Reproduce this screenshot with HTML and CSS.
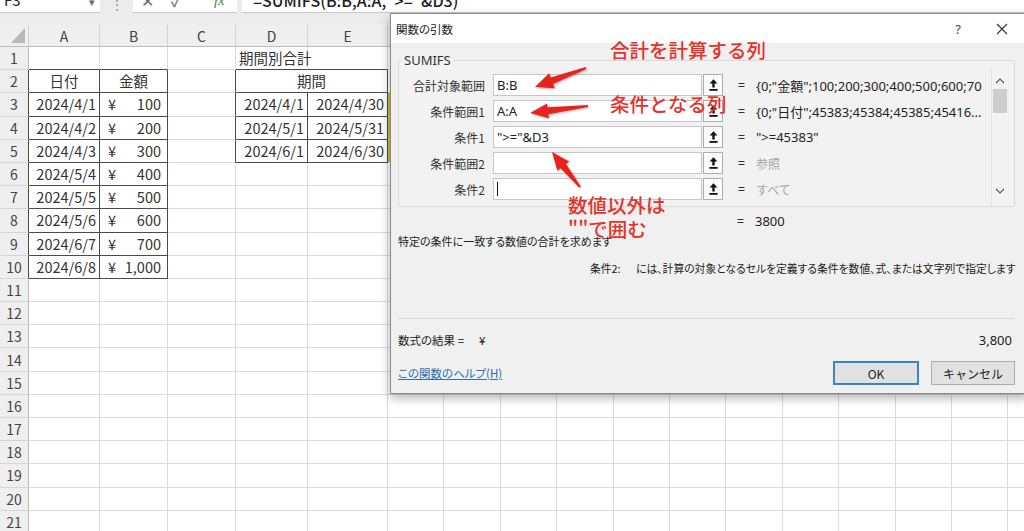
FILE: index.html
```html
<!DOCTYPE html>
<html lang="ja">
<head>
<meta charset="utf-8">
<title>関数の引数 - SUMIFS</title>
<link rel="stylesheet" href="styles.css">
</head>
<body>
<div class="fbar">
  <div class="namebox"><span class="fb-text">F3</span><span class="dd">▾</span></div>
  <div class="dots">⋮</div>
  <div class="fbtns"><span class="fb-text ic">✕</span><span class="fb-text ic">✓</span><span class="fb-text fx">fx</span></div>
  <div class="formula"><span class="fb-text">=SUMIFS(B:B,A:A,"&gt;="&amp;D3)</span></div>
</div>

<div class="sheet">
  <div class="row head"><span class="corner"><svg width="16" height="17" viewBox="0 0 16 17"><path d="M15 1 V16 H1 Z" fill="#b9b9b9"/></svg></span><span>A</span><span>B</span><span>C</span><span>D</span><span>E</span><span>F</span><span>G</span><span>H</span><span>I</span><span>J</span><span>K</span><span>L</span><span>M</span><span>N</span><span>O</span><span>P</span><span>Q</span></div>
  <div class="row"><span class="rh">1</span><span class="tb"></span><span class="tb"></span><span></span><span class="tb">期間別合計</span><span class="tb"></span><span></span><span></span><span></span><span></span><span></span><span></span><span></span><span></span><span></span><span></span><span></span><span></span></div>
  <div class="row"><span class="rh tr">2</span><span class="t ctr">日付</span><span class="t ctr">金額</span><span class="tr"></span><span class="t ctr span2">期間</span><span></span><span></span><span></span><span></span><span></span><span></span><span></span><span></span><span></span><span></span><span></span><span></span></div>
  <div class="row"><span class="rh tr">3</span><span class="t r">2024/4/1</span><span class="t yen"><span>¥</span><span>100</span></span><span class="tr"></span><span class="t r">2024/4/1</span><span class="t r">2024/4/30</span><span class="sel"></span><span></span><span></span><span></span><span></span><span></span><span></span><span></span><span></span><span></span><span></span><span></span></div>
  <div class="row"><span class="rh tr">4</span><span class="t r">2024/4/2</span><span class="t yen"><span>¥</span><span>200</span></span><span class="tr"></span><span class="t r">2024/5/1</span><span class="t r">2024/5/31</span><span class="sel"></span><span></span><span></span><span></span><span></span><span></span><span></span><span></span><span></span><span></span><span></span><span></span></div>
  <div class="row"><span class="rh tr">5</span><span class="t r">2024/4/3</span><span class="t yen"><span>¥</span><span>300</span></span><span class="tr"></span><span class="t r">2024/6/1</span><span class="t r">2024/6/30</span><span class="sel"></span><span></span><span></span><span></span><span></span><span></span><span></span><span></span><span></span><span></span><span></span><span></span></div>
  <div class="row"><span class="rh tr">6</span><span class="t r">2024/5/4</span><span class="t yen"><span>¥</span><span>400</span></span><span></span><span></span><span></span><span></span><span></span><span></span><span></span><span></span><span></span><span></span><span></span><span></span><span></span><span></span><span></span></div>
  <div class="row"><span class="rh tr">7</span><span class="t r">2024/5/5</span><span class="t yen"><span>¥</span><span>500</span></span><span></span><span></span><span></span><span></span><span></span><span></span><span></span><span></span><span></span><span></span><span></span><span></span><span></span><span></span><span></span></div>
  <div class="row"><span class="rh tr">8</span><span class="t r">2024/5/6</span><span class="t yen"><span>¥</span><span>600</span></span><span></span><span></span><span></span><span></span><span></span><span></span><span></span><span></span><span></span><span></span><span></span><span></span><span></span><span></span><span></span></div>
  <div class="row"><span class="rh tr">9</span><span class="t r">2024/6/7</span><span class="t yen"><span>¥</span><span>700</span></span><span></span><span></span><span></span><span></span><span></span><span></span><span></span><span></span><span></span><span></span><span></span><span></span><span></span><span></span><span></span></div>
  <div class="row"><span class="rh tr">10</span><span class="t r">2024/6/8</span><span class="t yen"><span>¥</span><span>1,000</span></span><span></span><span></span><span></span><span></span><span></span><span></span><span></span><span></span><span></span><span></span><span></span><span></span><span></span><span></span><span></span></div>
  <div class="row"><span class="rh">11</span><span></span><span></span><span></span><span></span><span></span><span></span><span></span><span></span><span></span><span></span><span></span><span></span><span></span><span></span><span></span><span></span><span></span></div>
  <div class="row"><span class="rh">12</span><span></span><span></span><span></span><span></span><span></span><span></span><span></span><span></span><span></span><span></span><span></span><span></span><span></span><span></span><span></span><span></span><span></span></div>
  <div class="row"><span class="rh">13</span><span></span><span></span><span></span><span></span><span></span><span></span><span></span><span></span><span></span><span></span><span></span><span></span><span></span><span></span><span></span><span></span><span></span></div>
  <div class="row"><span class="rh">14</span><span></span><span></span><span></span><span></span><span></span><span></span><span></span><span></span><span></span><span></span><span></span><span></span><span></span><span></span><span></span><span></span><span></span></div>
  <div class="row"><span class="rh">15</span><span></span><span></span><span></span><span></span><span></span><span></span><span></span><span></span><span></span><span></span><span></span><span></span><span></span><span></span><span></span><span></span><span></span></div>
  <div class="row"><span class="rh">16</span><span></span><span></span><span></span><span></span><span></span><span></span><span></span><span></span><span></span><span></span><span></span><span></span><span></span><span></span><span></span><span></span><span></span></div>
  <div class="row"><span class="rh">17</span><span></span><span></span><span></span><span></span><span></span><span></span><span></span><span></span><span></span><span></span><span></span><span></span><span></span><span></span><span></span><span></span><span></span></div>
  <div class="row"><span class="rh">18</span><span></span><span></span><span></span><span></span><span></span><span></span><span></span><span></span><span></span><span></span><span></span><span></span><span></span><span></span><span></span><span></span><span></span></div>
  <div class="row"><span class="rh">19</span><span></span><span></span><span></span><span></span><span></span><span></span><span></span><span></span><span></span><span></span><span></span><span></span><span></span><span></span><span></span><span></span><span></span></div>
  <div class="row"><span class="rh">20</span><span></span><span></span><span></span><span></span><span></span><span></span><span></span><span></span><span></span><span></span><span></span><span></span><span></span><span></span><span></span><span></span><span></span></div>
  <div class="row"><span class="rh">21</span><span></span><span></span><span></span><span></span><span></span><span></span><span></span><span></span><span></span><span></span><span></span><span></span><span></span><span></span><span></span><span></span><span></span></div>
</div>

<div class="dialog">
  <div class="titlebar">
    <span class="title">関数の引数</span>
    <span class="tbtn help">?</span>
    <span class="tbtn close"><svg width="12" height="12" viewBox="0 0 12 12"><path d="M1 1 L11 11 M11 1 L1 11" stroke="#333" stroke-width="1.1"/></svg></span>
  </div>
  <div class="dbody">
    <fieldset class="group">
      <legend>SUMIFS</legend>
      <div class="group-inner">
        <div class="args">
          <div class="arg"><span class="lbl">合計対象範囲</span><span class="input">B:B</span><span class="pick"><svg width="9" height="12" viewBox="0 0 9 12"><path d="M4.5 0.3 L0.6 4.6 H3.3 V8.6 H5.7 V4.6 H8.4 Z" fill="#111"/><rect x="0.4" y="10" width="8.2" height="1.8" fill="#111"/></svg></span><span class="eq">=</span><span class="val">{0;"金額";100;200;300;400;500;600;700;1000}</span></div>
          <div class="arg"><span class="lbl">条件範囲1</span><span class="input">A:A</span><span class="pick"><svg width="9" height="12" viewBox="0 0 9 12"><path d="M4.5 0.3 L0.6 4.6 H3.3 V8.6 H5.7 V4.6 H8.4 Z" fill="#111"/><rect x="0.4" y="10" width="8.2" height="1.8" fill="#111"/></svg></span><span class="eq">=</span><span class="val">{0;"日付";45383;45384;45385;45416...</span></div>
          <div class="arg"><span class="lbl">条件1</span><span class="input">"&gt;="&amp;D3</span><span class="pick"><svg width="9" height="12" viewBox="0 0 9 12"><path d="M4.5 0.3 L0.6 4.6 H3.3 V8.6 H5.7 V4.6 H8.4 Z" fill="#111"/><rect x="0.4" y="10" width="8.2" height="1.8" fill="#111"/></svg></span><span class="eq">=</span><span class="val">"&gt;=45383"</span></div>
          <div class="arg"><span class="lbl">条件範囲2</span><span class="input"></span><span class="pick"><svg width="9" height="12" viewBox="0 0 9 12"><path d="M4.5 0.3 L0.6 4.6 H3.3 V8.6 H5.7 V4.6 H8.4 Z" fill="#111"/><rect x="0.4" y="10" width="8.2" height="1.8" fill="#111"/></svg></span><span class="eq">=</span><span class="val hint">参照</span></div>
          <div class="arg"><span class="lbl">条件2</span><span class="input"><span class="caret"></span></span><span class="pick"><svg width="9" height="12" viewBox="0 0 9 12"><path d="M4.5 0.3 L0.6 4.6 H3.3 V8.6 H5.7 V4.6 H8.4 Z" fill="#111"/><rect x="0.4" y="10" width="8.2" height="1.8" fill="#111"/></svg></span><span class="eq">=</span><span class="val hint">すべて</span></div>
        </div>
        <div class="vscroll">
          <svg width="10" height="6" viewBox="0 0 10 6"><path d="M1 5 L5 1 L9 5" fill="none" stroke="#555" stroke-width="1.1"/></svg>
          <span class="thumb"></span>
          <span class="spacer"></span>
          <svg width="10" height="6" viewBox="0 0 10 6"><path d="M1 1 L5 5 L9 1" fill="none" stroke="#555" stroke-width="1.1"/></svg>
        </div>
      </div>
    </fieldset>
    <div class="result"><span class="eq">=</span><span class="val">3800</span></div>
    <p class="desc">特定の条件に一致する数値の合計を求めます</p>
    <div class="arghelp"><span class="ah-name">条件2:</span><span class="ah-text">には、計算の対象となるセルを定義する条件を数値、式、または文字列で指定します</span></div>
    <div class="sep"></div>
    <div class="fres"><span>数式の結果 =</span><span class="fyen">¥</span><span class="fval">3,800</span></div>
    <div class="foot"><a class="help-link">この関数のヘルプ(H)</a><button class="btn ok">OK</button><button class="btn">キャンセル</button></div>
  </div>
</div>

<div class="note n1">合計を計算する列</div>
<div class="note n2">条件となる列</div>
<div class="note n3">数値以外は<br>""で囲む</div>

<svg class="arrows" width="1024" height="531" viewBox="0 0 1024 531">
  <polygon points="535,87 549.1,73.2 550.7,77.4 585.7,67.1 586.3,68.9 553.1,84.0 554.7,88.2" />
  <polygon points="530,113 547.0,103.4 547.5,107.3 587.9,105.0 588.1,107.0 548.3,114.3 548.8,118.2" />
  <polygon points="552,152 557.4,170.8 560.5,168.3 579.2,187.6 580.8,186.4 565.9,163.9 569.1,161.4" />
</svg>
</body>
</html>
```
FILE: styles.css
```css
* { box-sizing: border-box; margin: 0; padding: 0; }
html, body { width: 1024px; height: 531px; overflow: hidden; }
body {
  background: #ececec;
  font-family: "Noto Sans CJK JP", "Noto Sans", sans-serif;
  color: #333;
  position: relative;
}

/* formula bar (cut off at top) */
.fbar { display: flex; height: 13px; }
.fb-text { line-height: 14px; font-size: 15px; white-space: nowrap; }
.namebox {
  width: 100px; background: #fff; border-bottom: 1px solid #c9c9c9;
  display: flex; align-items: flex-end; justify-content: space-between;
  padding: 0 5px 5.5px 4px; overflow: hidden; color: #222;
}
.dd { font-size: 11px; line-height: 10px; color: #666; padding-bottom: 1px; }
.dots { width: 33px; text-align: center; color: #9a9a9a; font-size: 14px; line-height: 8px; overflow: hidden; }
.fbtns {
  width: 104px; background: #fff; border-bottom: 1px solid #c9c9c9;
  display: flex; align-items: flex-end; padding: 0 0 5.5px 8px; gap: 17px; overflow: hidden;
}
.fbtns .ic { color: #666; font-size: 16px; }
.fbtns .fx { font-family: "Liberation Serif", serif; font-style: italic; color: #3f8a4d; margin-left: 15px; }
.formula {
  flex: 1; margin-left: 5px; background: #fff; border-bottom: 1px solid #c9c9c9;
  display: flex; align-items: flex-end; padding: 0 0 5.5px 11px; overflow: hidden; color: #222;
}
.formula .fb-text { font-size: 16px; font-weight: 500; }

/* sheet grid */
.sheet { margin-top: 12px; width: 1024px; overflow: hidden; }
.row {
  display: grid;
  grid-template-columns: 29px 71px 68px 68px 72px 80px repeat(12, 56.4px);
  height: 23.2px; background: #fff;
  font-size: 14.5px; line-height: 20px; color: #333;
}
.row > span {
  border-right: 1px solid #dadada; border-bottom: 1px solid #dadada;
  white-space: nowrap; display: flex; align-items: center; padding: 0 3px; min-width: 0;
}
.row > .rh {
  background: #efefef; justify-content: center; color: #444; font-size: 14px;
  border-right-color: #bcbcbc; border-bottom-color: #d6d6d6; padding: 0;
}
.row.head { height: 22px; background: #efefef; }
.row.head > span {
  justify-content: center; color: #444; font-size: 14px;
  border-right-color: #d2d2d2; border-bottom-color: #bcbcbc;
}
.row.head > .corner { align-items: flex-end; justify-content: flex-end; padding: 0 2px 2px 0; }
.row > .t { border-right-color: #4a4a4a; border-bottom-color: #4a4a4a; }
.row > .tb { border-bottom-color: #4a4a4a; }
.row > .tr { border-right-color: #4a4a4a; }
.row > .r { justify-content: flex-end; }
.row > .ctr { justify-content: center; }
.row > .span2 { grid-column: span 2; }
.row > .yen { justify-content: space-between; padding: 0 6px 0 8px; }
.row > .sel { box-shadow: inset 2px 0 0 #c8bb3a; }

/* dialog */
.dialog {
  position: absolute; left: 390px; top: 13px; width: 640px; height: 381px;
  background: #f0f0f0; border: 1px solid #8a8a8a;
  box-shadow: 0 4px 10px rgba(0, 0, 0, 0.3);
  font-family: "Noto Sans", "Noto Sans CJK JP", sans-serif;
  font-size: 12px; color: #1e1e1e;
  display: flex; flex-direction: column;
}
.titlebar { height: 29px; background: #fff; display: flex; align-items: center; padding-left: 5px; }
.title { font-family: "Noto Sans CJK JP", sans-serif; font-size: 11.5px; font-feature-settings: "palt"; flex: 1; color: #222; }
.tbtn { display: flex; align-items: center; justify-content: center; height: 29px; }
.help { width: 46px; font-size: 13px; color: #444; }
.close { width: 42px; margin-right: 6px; }

.dbody { padding: 0 14px 0 7px; display: flex; flex-direction: column; }
.group {
  margin-top: 9px; border: 1px solid #dadada; border-radius: 2px; padding: 0;
  min-inline-size: 0; background: #f2f2f2;
}
.group legend {
  margin-left: 2px; padding: 0 3px; font-size: 13px; line-height: 16px; color: #333;
}
.group-inner { display: flex; }
.args { flex: 1; min-width: 0; padding: 6px 9px 6px 0; display: flex; flex-direction: column; gap: 4px; }
.arg { display: flex; align-items: center; height: 22px; }
.lbl {
  width: 86px; flex-shrink: 0; text-align: right; margin-right: 8px;
  font-family: "Noto Sans CJK JP", sans-serif; font-size: 12px; color: #333; white-space: nowrap;
}
.input {
  width: 209px; flex-shrink: 0; height: 22px; background: #fff; border: 1px solid #c6c6c6;
  padding-left: 3px; font-size: 13px; line-height: 20px; color: #222;
  display: flex; align-items: center; white-space: nowrap;
}
.caret { display: block; width: 1px; height: 14px; background: #111; }
.pick {
  width: 20px; flex-shrink: 0; height: 22px; margin-left: 1px; background: #fbfbfb; border: 1px solid #adadad;
  display: flex; align-items: center; justify-content: center;
}
.eq { width: 9px; flex-shrink: 0; margin-left: 14px; font-size: 13px; color: #333; text-align: center; }
.val {
  flex: 1; min-width: 0; margin-left: 10px; overflow: hidden; white-space: nowrap;
  font-size: 13px; color: #222;
}
.val.hint { color: #a6a6a6; font-family: "Noto Sans CJK JP", sans-serif; font-size: 12px; }
.vscroll {
  width: 17px; flex-shrink: 0; margin-right: 6px; border-left: 1px solid #e4e4e4;
  display: flex; flex-direction: column; align-items: center; padding: 10px 0 12px;
}
.thumb { width: 14px; height: 24px; background: #cdcdcd; margin-top: 5px; }
.spacer { flex: 1; }

.result { margin-top: 4px; height: 20px; display: flex; align-items: center; padding-left: 324px; }
.desc {
  height: 20px; line-height: 20px; font-family: "Noto Sans CJK JP", sans-serif;
  font-size: 11px; font-feature-settings: "palt"; color: #222;
}
.arghelp {
  margin-top: 7px; height: 20px; display: flex; align-items: center; padding-left: 192px;
  font-family: "Noto Sans CJK JP", sans-serif; font-size: 10.8px; font-feature-settings: "palt"; color: #222;
  white-space: nowrap;
}
.ah-name { width: 46px; flex-shrink: 0; }
.ah-text { flex-shrink: 0; }
.sep { margin-top: 40px; border-top: 1px solid #dcdcdc; }
.fres {
  margin-top: 11px; height: 20px; display: flex; align-items: center;
  font-family: "Noto Sans CJK JP", sans-serif; font-size: 11.5px; font-feature-settings: "palt"; color: #222;
}
.fyen { margin-left: 15px; }
.fval { margin-left: auto; margin-right: 3px; font-family: "Noto Sans", sans-serif; font-size: 13px; }
.foot { margin-top: 11px; display: flex; align-items: center; }
.help-link {
  font-family: "Noto Sans CJK JP", sans-serif; font-size: 11.5px; font-feature-settings: "palt"; color: #2f6fae;
  text-decoration: underline; flex: 1; cursor: pointer;
}
.btn {
  width: 84px; height: 24px; background: #e1e1e1; border: 1px solid #adadad;
  font-family: "Noto Sans CJK JP", sans-serif; font-size: 12px; color: #222; margin-left: 12px;
}
.btn.ok { width: 86px; border: 2px solid #3b84c4; margin-left: 0; }

/* annotations */
.note {
  position: absolute; color: #e5322b; font-family: "Noto Sans CJK JP", sans-serif;
  font-size: 19.5px; line-height: 24px; font-weight: 500; white-space: nowrap;
}
.n1 { left: 610px; top: 38px; }
.n2 { left: 610px; top: 92px; }
.n3 { left: 568px; top: 193px; }
.arrows { position: absolute; left: 0; top: 0; pointer-events: none; }
.arrows polygon { fill: #e8231b; filter: drop-shadow(1px 1px 1px rgba(0, 0, 0, 0.3)); }
```
